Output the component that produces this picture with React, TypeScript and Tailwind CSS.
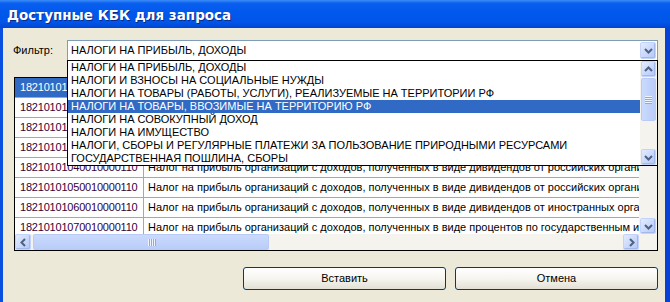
import { ReactNode } from "react";

const filters = [
  "НАЛОГИ НА ПРИБЫЛЬ, ДОХОДЫ",
  "НАЛОГИ И ВЗНОСЫ НА СОЦИАЛЬНЫЕ НУЖДЫ",
  "НАЛОГИ НА ТОВАРЫ (РАБОТЫ, УСЛУГИ), РЕАЛИЗУЕМЫЕ НА ТЕРРИТОРИИ РФ",
  "НАЛОГИ НА ТОВАРЫ, ВВОЗИМЫЕ НА ТЕРРИТОРИЮ РФ",
  "НАЛОГИ НА СОВОКУПНЫЙ ДОХОД",
  "НАЛОГИ НА ИМУЩЕСТВО",
  "НАЛОГИ, СБОРЫ И РЕГУЛЯРНЫЕ ПЛАТЕЖИ ЗА ПОЛЬЗОВАНИЕ ПРИРОДНЫМИ РЕСУРСАМИ",
  "ГОСУДАРСТВЕННАЯ ПОШЛИНА, СБОРЫ",
];

const rows = [
  { code: "18210101010010000110", name: "Налог на прибыль организаций, зачисляемый в федеральный бюджет" },
  { code: "18210101011010000110", name: "Налог на прибыль организаций, зачисляемый в бюджеты субъектов" },
  { code: "18210101012010000110", name: "Налог на прибыль организаций, зачисляемый в местные бюджеты" },
  { code: "18210101030010000110", name: "Налог на прибыль организаций с доходов иностранных организаций" },
  { code: "18210101040010000110", name: "Налог на прибыль организаций с доходов, полученных в виде дивидендов от российских организаций" },
  { code: "18210101050010000110", name: "Налог на прибыль организаций с доходов, полученных в виде дивидендов от российских организаций" },
  { code: "18210101060010000110", name: "Налог на прибыль организаций с доходов, полученных в виде дивидендов от иностранных организаций" },
  { code: "18210101070010000110", name: "Налог на прибыль организаций с доходов, полученных в виде процентов по государственным и муниципальным ценным бумагам" },
];

function Chevron({ dir }: { dir: "up" | "down" | "left" | "right" }) {
  const pts = {
    up: "1,6 4.5,2.5 8,6",
    down: "1,3 4.5,6.5 8,3",
    left: "6,1 2.5,4.5 6,8",
    right: "3,1 6.5,4.5 3,8",
  }[dir];
  return (
    <svg width="9" height="9" viewBox="0 0 9 9">
      <polyline points={pts} fill="none" stroke="#4D6185" strokeWidth="2" />
    </svg>
  );
}

function XpBtn({ dir, className = "" }: { dir: "up" | "down" | "left" | "right"; className?: string }) {
  return (
    <div
      className={`flex shrink-0 items-center justify-center rounded-[2px] border border-[#C3D3FC] bg-gradient-to-br from-[#E3EBFE] to-[#B4C8F6] shadow-[inset_-1px_-1px_0_#A3B9EE] ${className}`}
    >
      <Chevron dir={dir} />
    </div>
  );
}

function VThumb({ className = "" }: { className?: string }) {
  return (
    <div
      className={`flex flex-col items-center justify-center gap-[1px] rounded-[2px] border border-[#B7CBF6] bg-gradient-to-r from-[#CADAFE] to-[#BACDF8] ${className}`}
    >
      {[0, 1, 2, 3].map((i) => (
        <div key={i} className="h-[1px] w-[7px] bg-[#EEF4FE] shadow-[0_1px_0_#8CA9EE]" />
      ))}
    </div>
  );
}

function Cell({ children, className = "" }: { children: ReactNode; className?: string }) {
  return <div className={`overflow-hidden whitespace-nowrap ${className}`}>{children}</div>;
}

export default function App() {
  return (
    <div className="flex h-[302px] w-[670px] flex-col overflow-hidden font-['Liberation_Sans',Arial,sans-serif] text-[11px] text-black">
      {/* title bar */}
      <div className="flex h-[28px] shrink-0 items-center bg-[linear-gradient(to_bottom,#3A8CF8_0%,#0A5FEF_12%,#0058EC_45%,#0055E8_80%,#0045D2_100%)] pl-[7px] pt-[3px]">
        <span className="font-['DejaVu_Sans',sans-serif] text-[13.5px] font-bold text-white [text-shadow:1px_1px_#0A2A8A]">
          Доступные КБК для запроса
        </span>
      </div>

      <div className="flex flex-1 flex-col border-l-[3px] border-r-[5px] border-l-[#0A4FE0] border-r-[#0842D4] bg-[#ECE9D8] pl-[10px] pr-[7px] pt-[12px]">
        {/* filter */}
        <div className="relative z-10 flex items-center">
          <span className="w-[54px]">Фильтр:</span>
          <div className="relative flex h-[21px] w-[591px] items-center border border-[#7F9DB9] bg-white">
            <span className="flex-1 pl-[3px]">{filters[0]}</span>
            <XpBtn dir="down" className="mr-[1px] h-[17px] w-[16px]" />

            {/* open list */}
            <div className="absolute left-[-1px] top-full flex h-[106px] w-[591px] border border-black bg-white">
              <div className="flex-1">
                {filters.map((f, i) => (
                  <div
                    key={f}
                    className={`h-[13px] whitespace-nowrap pl-[3px] leading-[13px] ${i === 3 ? "bg-[#316AC5] text-white" : ""}`}
                  >
                    {f}
                  </div>
                ))}
              </div>
              <div className="flex w-[17px] flex-col bg-[#F4F3EE] pl-[1px]">
                <XpBtn dir="up" className="h-[16px] w-[15px]" />
                <VThumb className="mt-[1px] h-[43px] w-[15px]" />
                <div className="flex-1" />
                <XpBtn dir="down" className="h-[16px] w-[15px]" />
              </div>
            </div>
          </div>
        </div>

        {/* grid */}
        <div className="ml-[1px] mt-[16px] flex h-[174px] w-[644px] flex-col border border-black bg-white">
          <div className="flex h-[156px]">
            <div className="w-[624px] overflow-hidden">
              {rows.map((r, i) => (
                <div
                  key={r.code}
                  className={`flex h-[20px] items-center border-b border-[#ACA899] ${i === 0 ? "bg-[#316AC5] text-white" : ""}`}
                >
                  <Cell className={`w-[129px] border-r border-[#ACA899] pl-[5px] leading-[19px] tracking-[-0.2px] ${i === 0 ? "" : "text-[#360038]"}`}>
                    {r.code}
                  </Cell>
                  <Cell className="flex-1 pl-[4px] leading-[19px]">{r.name}</Cell>
                </div>
              ))}
            </div>
            <div className="flex w-[18px] flex-col bg-[#F4F3EE] pl-[1px]">
              <XpBtn dir="up" className="h-[16px] w-[16px]" />
              <VThumb className="mt-[1px] h-[30px] w-[16px]" />
              <div className="flex-1" />
              <XpBtn dir="down" className="h-[16px] w-[16px]" />
            </div>
          </div>
          <div className="flex h-[16px]">
            <div className="flex w-[624px] bg-[#F4F3EE]">
              <XpBtn dir="left" className="h-[16px] w-[16px]" />
              <div className="ml-[2px] flex h-[16px] w-[236px] items-center justify-center gap-[1px] rounded-[2px] border border-[#B7CBF6] bg-gradient-to-b from-[#CADAFE] to-[#BACDF8]">
                {[0, 1, 2, 3].map((i) => (
                  <div key={i} className="h-[7px] w-[1px] bg-[#EEF4FE] shadow-[1px_0_0_#8CA9EE]" />
                ))}
              </div>
              <div className="flex-1" />
              <XpBtn dir="right" className="h-[16px] w-[16px]" />
            </div>
            <div className="flex-1 bg-[#F4F3EE]" />
          </div>
        </div>

        {/* buttons */}
        <div className="mt-[16px] flex justify-end gap-[9px]">
          {["Вставить", "Отмена"].map((t) => (
            <button
              key={t}
              className="h-[23px] w-[203px] rounded-[3px] border border-[#003C74] bg-gradient-to-b from-[#FFFFFF] via-[#F6F5F0] to-[#E3E0D5] text-[11px] text-black"
            >
              {t}
            </button>
          ))}
        </div>
      </div>
    </div>
  );
}
